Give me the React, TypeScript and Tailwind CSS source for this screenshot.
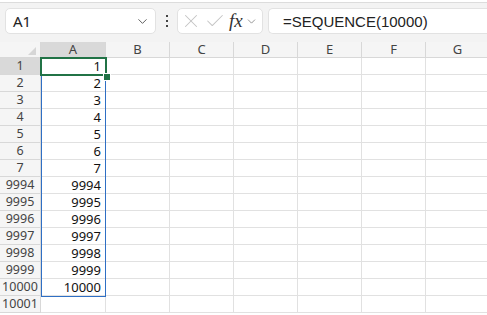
import { ChevronDown, X, Check } from "lucide-react";

const cols = ["A", "B", "C", "D", "E", "F", "G"];
const colW = ["w-[65px]", "w-[64px]", "w-[64px]", "w-[64px]", "w-[64px]", "w-[64px]", "w-[64px]"];

const rows: { label: string; value: string }[] = [
  ...[1, 2, 3, 4, 5, 6, 7].map((n) => ({ label: String(n), value: String(n) })),
  ...[9994, 9995, 9996, 9997, 9998, 9999, 10000].map((n) => ({ label: String(n), value: String(n) })),
  { label: "10001", value: "" },
];

export default function App() {
  return (
    <div className="w-[487px] h-[315px] overflow-hidden bg-white font-['Noto_Sans','Liberation_Sans',sans-serif] text-[#222]">
      {/* top strip */}
      <div className="h-[3px] bg-white border-b border-[#dcdcdc]" />

      {/* formula bar */}
      <div className="h-[39px] bg-[#f3f3f3] flex items-start pt-[5px] pl-[5px]">
        <div className="w-[151px] h-[26px] bg-white border border-[#e2e2e2] rounded-[5px] flex items-center pl-[7px] pr-[5px]">
          <span className="flex-1 text-[15px] leading-none text-[#222]">A1</span>
          <ChevronDown className="w-[15px] h-[15px] text-[#555]" strokeWidth={1.5} />
        </div>
        <div className="w-[21px] h-[26px] flex flex-col items-center justify-center gap-[3px]">
          <span className="w-[2px] h-[2px] bg-[#444]" />
          <span className="w-[2px] h-[2px] bg-[#444]" />
          <span className="w-[2px] h-[2px] bg-[#444]" />
        </div>
        <div className="w-[86px] h-[26px] bg-white border border-[#e2e2e2] rounded-[5px] flex items-center pl-[2px]">
          <X className="w-[22px] h-[22px] text-[#c4c4c4]" strokeWidth={1.1} />
          <Check className="w-[22px] h-[22px] text-[#c4c4c4] ml-[2px]" strokeWidth={1.1} />
          <span className="ml-[3px] font-['Liberation_Serif',serif] italic text-[19px] leading-none text-[#333] pb-[2px]">
            fx
          </span>
          <ChevronDown className="w-[13px] h-[13px] text-[#777] ml-[2px]" strokeWidth={1.4} />
        </div>
        <div className="ml-[5px] flex-1 h-[26px] bg-white border border-[#e2e2e2] border-r-0 rounded-l-[5px] flex items-center pl-[14px]">
          <span className="text-[15px] leading-none text-[#222] font-['Liberation_Sans',sans-serif]">=SEQUENCE(10000)</span>
        </div>
      </div>

      {/* grid */}
      <div className="relative">
        {/* column headers */}
        <div className="flex h-[16px] bg-[#f5f5f5]">
          <div className="w-[41px] shrink-0 border-r border-b border-[#d8d8d8] relative">
            <div className="absolute right-[4px] bottom-[2px] w-0 h-0 border-l-[8px] border-l-transparent border-b-[8px] border-b-[#d6d6d6]" />
          </div>
          {cols.map((c, i) => (
            <div
              key={c}
              className={`${colW[i]} shrink-0 border-r border-b border-[#d8d8d8] flex items-center justify-center text-[13px] leading-none ${
                c === "A" ? "bg-[#d9d9d9]" : ""
              } text-[#444]`}
            >
              {c}
            </div>
          ))}
        </div>

        {/* rows */}
        {rows.map((r, ri) => (
          <div key={r.label} className="flex h-[17px]">
            <div
              className={`w-[41px] shrink-0 border-r border-b border-[#d8d8d8] flex items-center justify-center text-[12.5px] leading-none text-[#444] ${
                ri === 0 ? "bg-[#d9d9d9]" : "bg-[#f5f5f5]"
              }`}
            >
              {r.label}
            </div>
            {cols.map((c, i) => (
              <div
                key={c}
                className={`${colW[i]} shrink-0 border-r border-b border-[#e1e1e1] flex items-center justify-end pr-[4px] text-[13px] leading-none text-[#111]`}
              >
                {c === "A" ? r.value : ""}
              </div>
            ))}
          </div>
        ))}

        {/* spill range outline A1:A10000 */}
        <div className="absolute left-[41px] top-[16px] w-[65px] h-[239px] border border-[#2f6fc4] pointer-events-none" />
        {/* active cell A1 */}
        <div className="absolute left-[40px] top-[15px] w-[67px] h-[19px] border-2 border-[#217346] pointer-events-none" />
        {/* fill handle */}
        <div className="absolute left-[103px] top-[31px] w-[6px] h-[6px] bg-[#217346] border border-white box-content pointer-events-none" />
      </div>
    </div>
  );
}
